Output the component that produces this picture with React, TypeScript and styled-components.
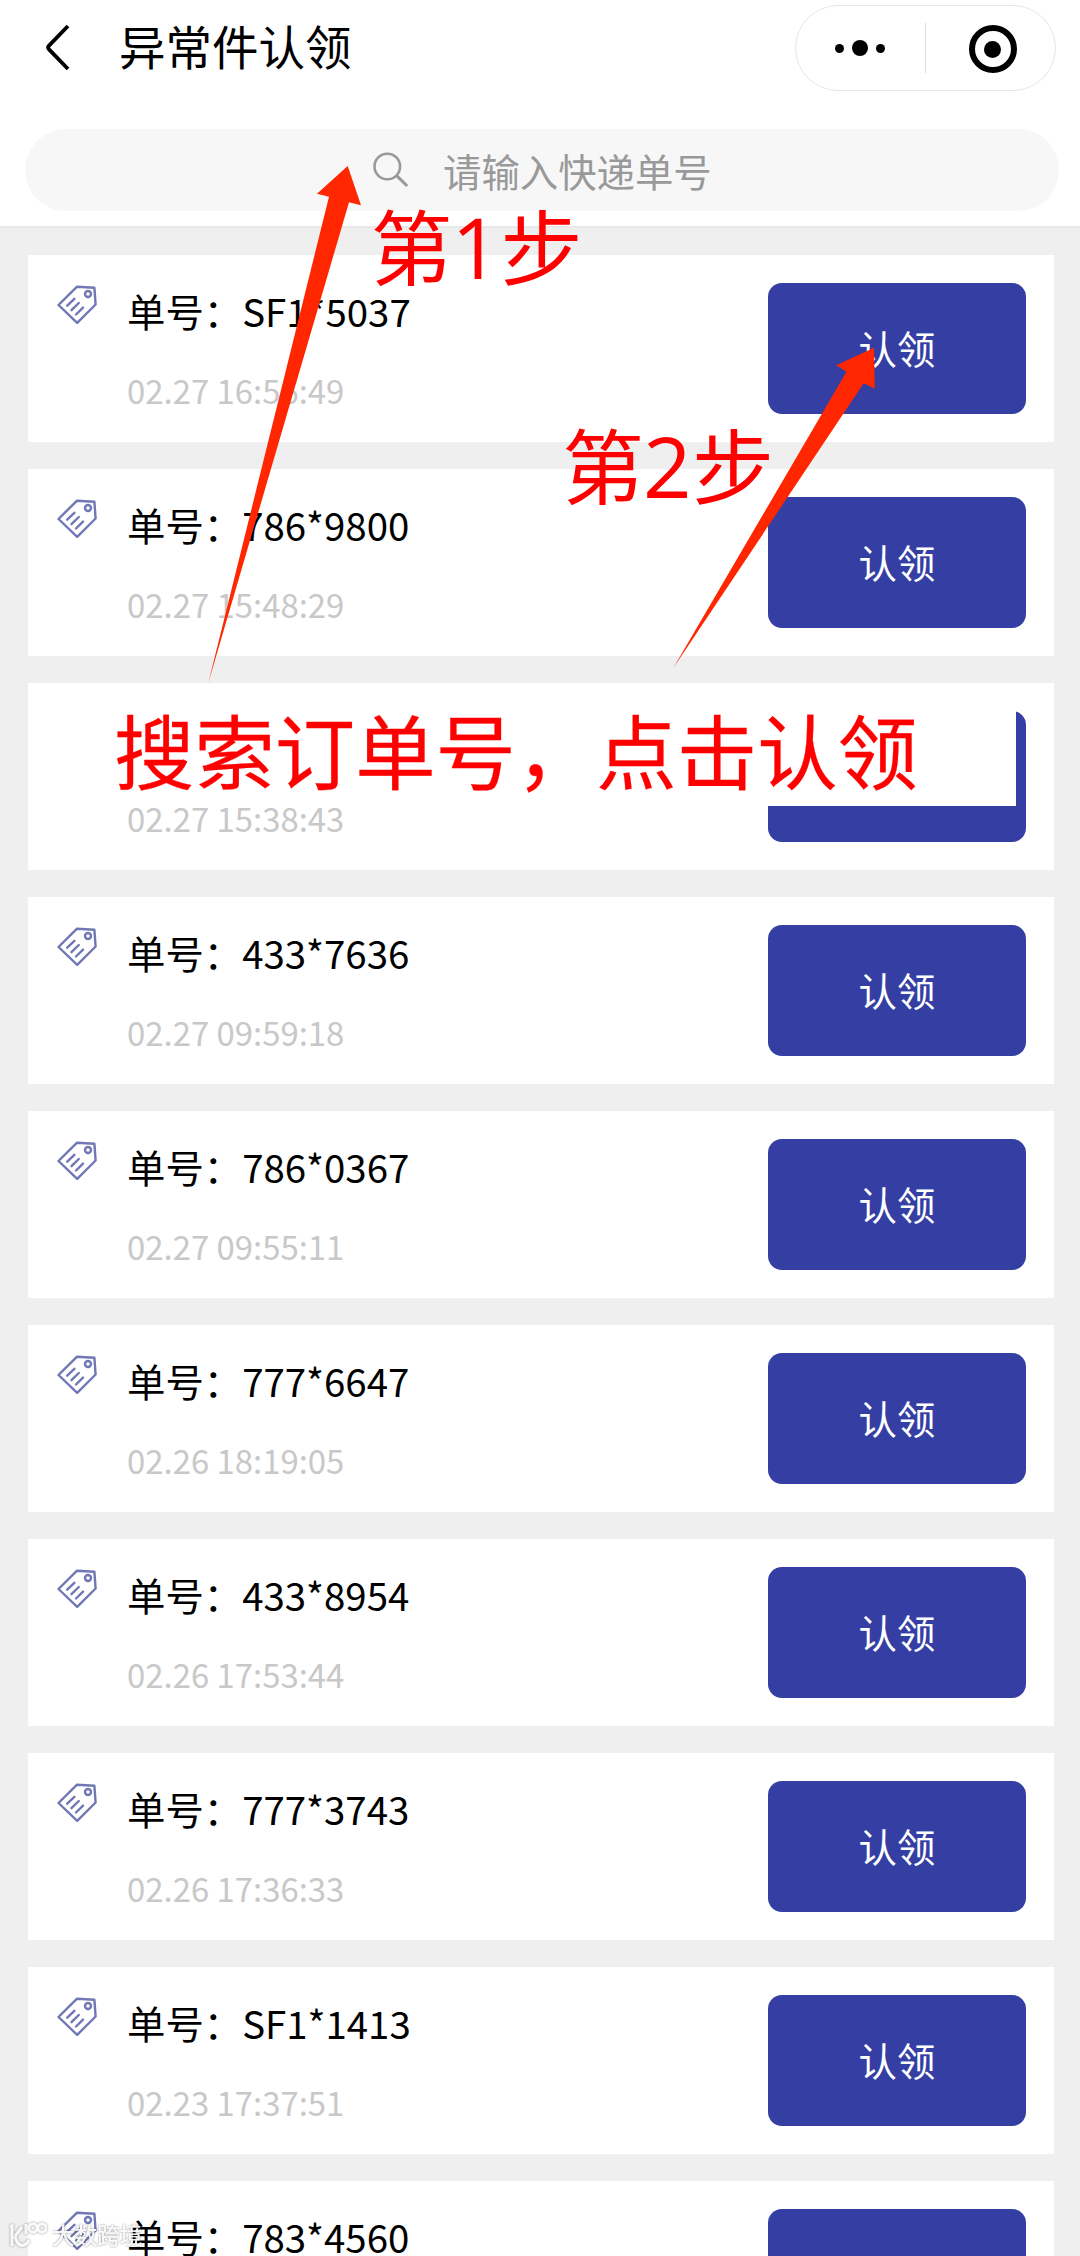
import React from 'react';
import styled, { createGlobalStyle } from 'styled-components';

const GlobalStyle = createGlobalStyle`
  *, *::before, *::after { box-sizing: border-box; }
  html, body { margin: 0; padding: 0; background: #efefef; }
  body { font-family: "Noto Sans CJK SC", sans-serif; overflow: hidden; }
`;

const Screen = styled.main`
  position: relative;
  width: 1080px;
  height: 2256px;
  overflow: hidden;
  background: #efefef;
`;

const Header = styled.header`
  height: 228px;
  background: #fff;
  border-bottom: 2px solid #e8e8e8;
`;

const NavBar = styled.div`
  display: flex;
  align-items: flex-start;
  height: 129px;
  padding: 5px 24px 0 44px;
`;

const BackIcon = styled.svg`
  width: 28px;
  height: 50px;
  margin-top: 18px;
`;

const Title = styled.h1`
  flex: 1;
  margin: 10px 0 0 47px;
  font-size: 46.5px;
  line-height: 60px;
  font-weight: 400;
  color: #000;
`;

const Capsule = styled.div`
  display: flex;
  align-items: center;
  width: 261px;
  height: 86px;
  border: 1px solid #e6e6e6;
  border-radius: 43px;
`;

const CapsuleHalf = styled.div<{ $width: number }>`
  display: flex;
  align-items: center;
  justify-content: center;
  gap: 8px;
  width: ${(p) => p.$width}px;
  height: 50px;
  padding-right: 1px;
  & + & { border-left: 1px solid #dcdcdc; padding-left: 5px; }
`;

const Dot = styled.span<{ $size: number }>`
  width: ${(p) => p.$size}px;
  height: ${(p) => p.$size}px;
  border-radius: 50%;
  background: #000;
`;

const Target = styled.span`
  display: flex;
  align-items: center;
  justify-content: center;
  width: 48px;
  height: 48px;
  margin-top: 2px;
  border: 6px solid #000;
  border-radius: 50%;
`;

const SearchBox = styled.div`
  display: flex;
  align-items: center;
  width: 1034px;
  height: 82px;
  margin-left: 25px;
  padding-left: 347px;
  border-radius: 41px;
  background: #f7f7f7;
  color: #999;
  font-size: 38.4px;
  line-height: 50px;
`;

const SearchIcon = styled.svg`
  width: 38px;
  height: 38px;
  margin-right: 33px;
`;

const List = styled.ul`
  display: flex;
  flex-direction: column;
  gap: 27px;
  margin: 0;
  padding: 27px 26px 0 28px;
  list-style: none;
`;

const Card = styled.li`
  display: flex;
  flex: none;
  height: 187px;
  padding: 28px 28px 28px 29px;
  background: #fff;
`;

const TagIcon = styled.svg`
  width: 42px;
  height: 42px;
  margin-right: 28px;
`;

const Info = styled.div`
  flex: 1;
`;

const Number = styled.div`
  height: 50px;
  margin-top: 2px;
  font-size: 38.4px;
  line-height: 50px;
  color: #000;
`;

const Time = styled.div`
  margin-top: 33px;
  font-size: 32.9px;
  line-height: 44px;
  color: #c8c8c8;
`;

const ClaimButton = styled.button`
  width: 258px;
  height: 131px;
  padding: 0 0 3px;
  border: 0;
  border-radius: 14px;
  background: #353fa3;
  color: #fff;
  font: 38.4px/50px "Noto Sans CJK SC", sans-serif;
`;

const Arrows = styled.svg`
  position: absolute;
  inset: 0;
  width: 1080px;
  height: 2256px;
  pointer-events: none;
`;

const Note = styled.div<{ $x: number; $y: number }>`
  position: absolute;
  left: ${(p) => p.$x}px;
  top: ${(p) => p.$y}px;
  font-size: 82px;
  line-height: 100px;
  white-space: nowrap;
  color: #f00;
`;

const Digit = styled.span`
  display: inline-block;
  width: 48px;
  font-family: "Open Sans", sans-serif;
  font-size: 85px;
  line-height: 1;
  text-indent: -1px;
`;

const Banner = styled.div`
  position: absolute;
  left: 56px;
  top: 699px;
  width: 960px;
  height: 107px;
  padding-left: 58px;
  background: #fff;
  color: #f00;
  font-size: 80.4px;
  line-height: 99px;
  white-space: nowrap;
  -webkit-text-stroke: 0.3px #f00;
`;

const Watermark = styled.div`
  position: absolute;
  left: 8px;
  top: 2218px;
  display: flex;
  align-items: center;
  gap: 5px;
  color: rgba(255, 255, 255, 0.92);
  font-size: 22.6px;
  font-weight: 500;
  line-height: 34px;
  filter: drop-shadow(0 0 1px rgba(0, 0, 0, 0.45));
`;

const ROWS: { code?: string; time?: string }[] = [
  { code: 'SF1*5037', time: '02.27 16:56:49' },
  { code: '786*9800', time: '02.27 15:48:29' },
  { time: '02.27 15:38:43' },
  { code: '433*7636', time: '02.27 09:59:18' },
  { code: '786*0367', time: '02.27 09:55:11' },
  { code: '777*6647', time: '02.26 18:19:05' },
  { code: '433*8954', time: '02.26 17:53:44' },
  { code: '777*3743', time: '02.26 17:36:33' },
  { code: 'SF1*1413', time: '02.23 17:37:51' },
  { code: '783*4560' },
];

const Tag = () => (
  <TagIcon viewBox="0 0 42 42" fill="none" stroke="#7077b4" strokeWidth="2.4" strokeLinejoin="round" strokeLinecap="round">
    <path d="M1.5 22 L19.8 3.8 L37.4 4.8 L38.6 21.5 L20.2 39.8 Z" />
    <circle cx="31" cy="11" r="3" />
    <path d="M10.2 22.7 L17.4 15.8 M14.5 27.2 L21.8 20 M19 31.5 L26 24.6" />
  </TagIcon>
);

export default function App() {
  return (
    <Screen>
      <GlobalStyle />
      <Header>
        <NavBar>
          <BackIcon viewBox="0 0 28 50" fill="none" stroke="#000" strokeWidth="3.8" strokeLinejoin="round">
            <path d="M24 3 L5 22.6 Q3.2 24.5 5 26.4 L24 46" />
          </BackIcon>
          <Title>异常件认领</Title>
          <Capsule>
            <CapsuleHalf $width={129}>
              <Dot $size={9} />
              <Dot $size={16} />
              <Dot $size={9} />
            </CapsuleHalf>
            <CapsuleHalf $width={130}>
              <Target>
                <Dot $size={17} />
              </Target>
            </CapsuleHalf>
          </Capsule>
        </NavBar>
        <SearchBox>
          <SearchIcon viewBox="0 0 38 38" fill="none" stroke="#999" strokeWidth="2.6">
            <circle cx="15.3" cy="15.5" r="12.8" />
            <path d="M24.6 24.6 L35.2 35" strokeWidth="3" />
          </SearchIcon>
          请输入快递单号
        </SearchBox>
      </Header>

      <List>
        {ROWS.map(({ code, time }, i) => (
          <Card key={i}>
            <Tag />
            <Info>
              <Number>{code && `单号：${code}`}</Number>
              {time && <Time>{time}</Time>}
            </Info>
            <ClaimButton>{code && time && '认领'}</ClaimButton>
          </Card>
        ))}
      </List>

      <Banner>搜索订单号，点击认领</Banner>
      <Note $x={370.5} $y={194}>
        第<Digit>1</Digit>步
      </Note>
      <Note $x={562} $y={413}>
        第<Digit>2</Digit>步
      </Note>
      <Arrows viewBox="0 0 1080 2256" fill="#ff2600">
        <path d="M347.7 166 L361 205.3 L349 202.3 L208.3 683 L329 196.7 L317 193.7 Z" />
        <path d="M874 347.7 L874.7 388.7 L863.7 383.3 L673.3 668 L846.5 371.7 L836.2 365.3 Z" />
      </Arrows>

      <Watermark>
        <svg width="39" height="30" viewBox="0 0 39 30" fill="none" stroke="currentColor" strokeWidth="3.2">
          <path d="M2 7 L4 6 V26 M14 7 L7 16 M7 16 C9 27 17 28 21 20 M18 4 V14" />
          <circle cx="25" cy="8" r="4.2" />
          <circle cx="34" cy="8" r="4.2" />
        </svg>
        大数跨境
      </Watermark>
    </Screen>
  );
}
